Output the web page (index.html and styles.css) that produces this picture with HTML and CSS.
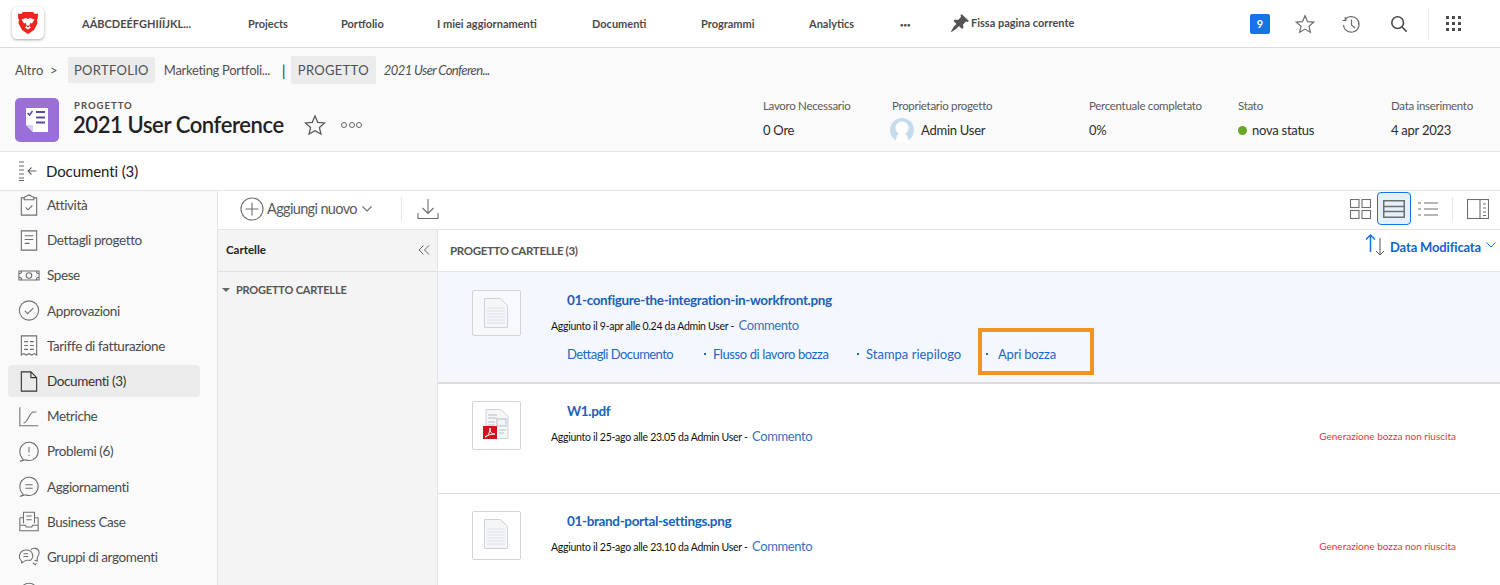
FILE: index.html
```html
<!DOCTYPE html>
<html lang="it">

<head>
    <meta charset="UTF-8">
    <title>2021 User Conference</title>
    <link rel="stylesheet" href="styles.css">
</head>

<body>

    <header class="topbar">
        <div class="logo">
            <svg width="22" height="24" viewBox="0 0 22 24">
                <path fill="#f0241c" d="M6 1h10l2 2 3-.5-.2 4.500-.8 2.500.6 2.500-3.600 7L11 23l-6-4-3.600-7 .6-2.500-.8-2.500L1 2.500 4 3z" />
                <path fill="#fff" d="M4.500 8.500 9 7l2 1 2-1 4.500 1.500-2.500 4-2-.5-.5 3 1.500 1.500-3 2-3-2L9.500 15l-.5-3-2 .5z" />
                <path fill="#f0241c" d="M9 14.500h4L11 16.500z" />
            </svg>
        </div>
        <nav class="topnav">
            <a>AÁBCDEÉFGHIÍÎJKL...</a>
            <a>Projects</a>
            <a>Portfolio</a>
            <a>I miei aggiornamenti</a>
            <a>Documenti</a>
            <a>Programmi</a>
            <a>Analytics</a>
            <a class="more">•••</a>
            <a class="pin">
                <svg width="18" height="18" viewBox="0 0 18 18">
                    <path fill="#555" d="M10.500 0 18 7l-1.500 1-1.500-.5-3 3 .5 3-1.500 1.500-3-3-3 3L.500 18l-.5-.5 2.500-4.500 3-3-3-3L4 5.500l3 .5 3-3-.5-1.500z" />
                </svg>
                Fissa pagina corrente
            </a>
        </nav>
        <div class="topicons">
            <span class="badge">9</span>
            <svg class="ic-star" width="20" height="20" viewBox="0 0 20 20">
                <path d="M10 1.800 12.500 7.600l6.200.5-4.700 4.100 1.400 6.100L10 15.100l-5.400 3.200 1.400-6.100-4.700-4.100 6.200-.5z" />
            </svg>
            <svg class="ic-line" width="20" height="20" viewBox="0 0 20 20">
                <path d="M3.500 6.500A7.800 7.800 0 1 1 2.500 11M1.500 6.500h3.500l-1 -3.500M10.500 5.500v5.500l3.500 3" />
            </svg>
            <svg class="ic-search" width="18" height="18" viewBox="0 0 20 20">
                <circle cx="8.500" cy="8.500" r="6.500" />
                <path d="m13 13 5.500 5.500" />
            </svg>
            <span class="topsep"></span>
            <div class="apps">
                <i></i><i></i><i></i><i></i><i></i><i></i><i></i><i></i><i></i>
            </div>
        </div>
    </header>

    <section class="projhead">
        <div class="crumbs">
            <span class="altro">Altro &nbsp;&gt;</span>
            <span class="tag">PORTFOLIO</span>
            <span class="crumb-name">Marketing Portfoli...</span>
            <span class="crumb-bar">|</span>
            <span class="tag tag-big">PROGETTO</span>
            <span class="crumb-it">2021 User Conferen...</span>
        </div>
        <div class="projrow">
            <div class="projicon">
                <svg width="24" height="26" viewBox="0 0 24 26">
                    <path fill="#fff" d="M1 1h22v24H8l-7-7z" />
                    <path fill="#d9cdf0" d="M1 18h7v7z" />
                    <path fill="none" stroke="#5a4b9c" stroke-width="1.500" d="m2.500 6 2 2 3-4" />
                    <path fill="none" stroke="#5a4b9c" stroke-width="2" d="M11 5h9M11 10.500h9M11 15.500h9" />
                </svg>
            </div>
            <div class="projtitle">
                <div class="projlabel">PROGETTO</div>
                <h1>2021 User Conference</h1>
            </div>
            <svg class="projstar" width="22" height="22" viewBox="0 0 20 20">
                <path d="M10 1.800 12.500 7.600l6.200.5-4.700 4.100 1.400 6.100L10 15.100l-5.400 3.200 1.400-6.100-4.700-4.100 6.200-.5z" />
            </svg>
            <div class="projdots"><i></i><i></i><i></i></div>
            <div class="projmeta">
                <div class="col col-work">
                    <label>Lavoro Necessario</label>
                    <span>0 Ore</span>
                </div>
                <div class="col col-owner">
                    <label>Proprietario progetto</label>
                    <span class="owner">
                        <svg width="24" height="24" viewBox="0 0 24 24">
                            <circle cx="12" cy="12" r="12" fill="#c5dcee" />
                            <circle cx="12" cy="10" r="6.500" fill="#fff" />
                            <path fill="#fff" d="M6 24c0-7 2-9 6-9s6 2 6 9z" />
                        </svg>
                        Admin User
                    </span>
                </div>
                <div class="col col-pct">
                    <label>Percentuale completato</label>
                    <span>0%</span>
                </div>
                <div class="col col-state">
                    <label>Stato</label>
                    <span><b class="dot"></b>nova status</span>
                </div>
                <div class="col">
                    <label>Data inserimento</label>
                    <span>4 apr 2023</span>
                </div>
            </div>
        </div>
    </section>

    <div class="subhead">
        <svg width="20" height="20" viewBox="0 0 20 20">
            <path d="M1 1h5M1 5h5M1 9h5M1 13h5M1 17h5M1 19.500h5" stroke-dasharray="none" />
            <path d="M18.500 10H10M13.500 6.500 10 10l3.500 3.500" />
        </svg>
        <span>Documenti (3)</span>
    </div>

    <div class="main">
        <aside class="sidebar">
            <ul class="sidelist">
                <li>
                    <svg viewBox="0 0 20 24"><path d="M5 4H2v18h16V4h-3M5 6V3.500L10 1l5 2.500V6zM6.500 14l2.500 2.500 4.500-4.500" /></svg>
                    Attività
                </li>
                <li>
                    <svg viewBox="0 0 20 24"><path d="M2 2h16v20H2zM5.500 7h9M5.500 11h9M5.500 15h5" /></svg>
                    Dettagli progetto
                </li>
                <li>
                    <svg viewBox="0 0 24 24"><path d="M1 7h22v10H1zM1 10c2 0 3-1 3-3M23 10c-2 0-3-1-3-3M1 14c2 0 3 1 3 3M23 14c-2 0-3 1-3 3" /><circle cx="12" cy="12" r="3" /></svg>
                    Spese
                </li>
                <li>
                    <svg viewBox="0 0 24 24"><circle cx="12" cy="12" r="10.500" /><path d="m7.500 12.500 3 3 6-6" /></svg>
                    Approvazioni
                </li>
                <li>
                    <svg viewBox="0 0 20 24"><path d="M2 22V2h16v20l-2.500-1.500L13 22l-3-1.500L7 22l-2.500-1.500zM5 8h4M11 8h4M5 12h4M11 12h4M5 16h4M11 16h4" /></svg>
                    Tariffe di fatturazione
                </li>
                <li class="active">
                    <svg viewBox="0 0 20 24"><path d="M2 2h10l6 6v14H2zM12 2v6h6" /></svg>
                    Documenti (3)
                </li>
                <li>
                    <svg viewBox="0 0 24 24"><path d="M2 2v20h20M6 19c5 0 6-12 11-12h3" /></svg>
                    Metriche
                </li>
                <li>
                    <svg viewBox="0 0 24 24"><path d="M6 21c-2-2-4-5-4-9a10 10 0 1 1 6 9l-6 2zM12 7v6M12 15.500v1.500" /></svg>
                    Problemi (6)
                </li>
                <li>
                    <svg viewBox="0 0 24 24"><path d="M6 21c-2-2-4-5-4-9a10 10 0 1 1 6 9l-6 2zM8 10h8M8 14h8" /></svg>
                    Aggiornamenti
                </li>
                <li>
                    <svg viewBox="0 0 24 24"><path d="M2 8h4M22 8h-4M2 8v14h20V8M2 16h6l1 2h6l1-2h6M6 14V2h12v12M9 6h6M9 10h6" /></svg>
                    Business Case
                </li>
                <li>
                    <svg viewBox="0 0 24 24"><path d="M4 17c-5-4-2-12 5-12s9 7 5 11H9l-5 3zM14 5c1-3 9-3 9 3 0 2-1 4-2 5v4l-3-1M6 9h5M6 12h5M16 19l3 2 1-2" /></svg>
                    Gruppi di argomenti
                </li>
                <li>
                    <svg viewBox="0 0 24 24"><circle cx="12" cy="12" r="10" /></svg>
                </li>
            </ul>
        </aside>

        <div class="content">
            <div class="toolbar">
                <svg class="tb-plus" width="24" height="24" viewBox="0 0 24 24">
                    <circle cx="12" cy="12" r="11" />
                    <path d="M12 5.500v13M5.500 12h13" />
                </svg>
                <span class="addnew">Aggiungi nuovo</span>
                <svg class="chev" width="10" height="6" viewBox="0 0 10 6"><path d="m.5.500 4.500 4.500L9.500.500" /></svg>
                <span class="tb-sep"></span>
                <svg class="tb-dl" width="22" height="22" viewBox="0 0 22 22">
                    <path d="M11 1v14M5.500 10l5.500 5.500 5.500-5.500M1 15v5.500h20V15" />
                </svg>
                <div class="views">
                    <svg width="21" height="20" viewBox="0 0 21 20">
                        <rect x=".5" y=".5" width="8.500" height="8" />
                        <rect x="12" y=".5" width="8.500" height="8" />
                        <rect x=".5" y="11.500" width="8.500" height="8" />
                        <rect x="12" y="11.500" width="8.500" height="8" />
                    </svg>
                    <span class="view-on">
                        <svg width="22" height="18" viewBox="0 0 22 18">
                            <rect x=".75" y=".75" width="20.500" height="16.500" />
                            <path d="M.75 6.500h20.500M.75 11.500h20.500" />
                        </svg>
                    </span>
                    <svg width="20" height="14" viewBox="0 0 20 14">
                        <path d="M0 1h3M6 1h14M0 7h3M6 7h14M0 13h3M6 13h14" />
                    </svg>
                    <span class="view-sep"></span>
                    <svg width="22" height="20" viewBox="0 0 22 20">
                        <rect x=".5" y=".5" width="21" height="19" />
                        <path d="M13 .5v19M16 5h3M16 9h3M16 13h3M16 16.500h3" />
                    </svg>
                </div>
            </div>

            <div class="panes">
                <div class="folders">
                    <div class="folders-head">
                        <span>Cartelle</span>
                        <svg width="12" height="10" viewBox="0 0 12 10"><path d="M5.500.500 1 5l4.500 4.500M11 .500 6.500 5l4.500 4.500" /></svg>
                    </div>
                    <div class="folder-item"><i class="tri"></i>PROGETTO CARTELLE</div>
                </div>

                <div class="docs">
                    <div class="docs-head">
                        <span class="docs-title">PROGETTO CARTELLE (3)</span>
                        <div class="sort">
                            <svg width="21" height="22" viewBox="0 0 21 22">
                                <path class="up" d="M5.500 18V1M1 5.500 5.500 1 10 5.500" />
                                <path class="down" d="M15 4v17M11 17l4 4 4-4" />
                            </svg>
                            <span>Data Modificata</span>
                            <svg class="chev-blue" width="10" height="6" viewBox="0 0 10 6"><path d="m.5.500 4.500 4.500L9.500.500" /></svg>
                        </div>
                    </div>

                    <article class="doc doc-sel">
                        <div class="thumb thumb-first">
                            <svg width="24" height="30" viewBox="0 0 24 30">
                                <path fill="#f4f6f8" stroke="#ccd2d8" d="M.5.500h16l7 7v22H.5z" />
                                <path fill="none" stroke="#dde1e6" d="M3 10h18M3 13h18M3 16h18M3 19h18M3 22h18M3 25h18" />
                            </svg>
                        </div>
                        <div class="doc-body">
                            <a class="doc-name">01-configure-the-integration-in-workfront.png</a>
                            <div class="doc-meta">Aggiunto il 9-apr alle 0.24 da Admin User - <a>Commento</a></div>
                            <div class="doc-actions">
                                <a class="act-1">Dettagli Documento</a>
                                <a class="act-2">Flusso di lavoro bozza</a>
                                <a class="act-3">Stampa riepilogo</a>
                                <a class="act-4">Apri bozza</a>
                            </div>
                        </div>
                        <div class="callout"></div>
                    </article>

                    <article class="doc">
                        <div class="thumb">
                            <svg width="26" height="30" viewBox="0 0 26 30">
                                <path fill="#f4f6f8" stroke="#ccd2d8" d="M3 .500h15l7 7v22H3z" />
                                <path fill="none" stroke="#b9c0c7" d="M5 6h9M5 9h9M5 13h7M5 16h7M16 21h7M16 24h5" />
                                <rect x="14" y="10" width="9" height="7" fill="none" stroke="#b9c0c7" />
                                <rect y="17" width="14" height="13" fill="#d1131c" />
                                <path fill="none" stroke="#fff" d="M2 28c4-1 5-6 5-9 0 5 2 6 5 6-4 0-7 1-10 3z" />
                            </svg>
                        </div>
                        <div class="doc-body">
                            <a class="doc-name">W1.pdf</a>
                            <div class="doc-meta">Aggiunto il 25-ago alle 23.05 da Admin User - <a>Commento</a></div>
                        </div>
                        <div class="doc-err">Generazione bozza non riuscita</div>
                    </article>

                    <article class="doc">
                        <div class="thumb">
                            <svg width="24" height="30" viewBox="0 0 24 30">
                                <path fill="#f4f6f8" stroke="#ccd2d8" d="M.5.500h16l7 7v22H.5z" />
                                <path fill="none" stroke="#dde1e6" d="M3 10h18M3 13h18M3 16h18M3 19h18M3 22h18M3 25h18" />
                            </svg>
                        </div>
                        <div class="doc-body">
                            <a class="doc-name">01-brand-portal-settings.png</a>
                            <div class="doc-meta">Aggiunto il 25-ago alle 23.10 da Admin User - <a>Commento</a></div>
                        </div>
                        <div class="doc-err">Generazione bozza non riuscita</div>
                    </article>
                </div>
            </div>
        </div>
    </div>

</body>

</html>
```

FILE: styles.css
```css
* {
    margin: 0;
    padding: 0;
    box-sizing: border-box;
    list-style: none;
}

html,
body {
    height: 585px;
    overflow: hidden;
}

body {
    background: #fff;
    color: #2c2c2c;
    font-family: "Lato", "Noto Sans", sans-serif;
    font-size: 13px;
}

/* top bar */
.topbar {
    display: flex;
    align-items: center;
    height: 48px;
    padding-left: 12px;
    border-bottom: 1px solid #dcdcdc;
}

.logo {
    display: flex;
    align-items: center;
    justify-content: center;
    width: 32px;
    height: 32px;
    margin-bottom: 1px;
    border-radius: 5px;
    background: #fff;
    box-shadow: 0 1px 3px rgba(0, 0, 0, .35);
}

.topnav {
    display: grid;
    grid-template-columns: 166px 93px 96px 155px 109px 108px 91px 51px auto;
    margin: 1px 0 0 38px;
    font-size: 11px;
    font-weight: 700;
    color: #4b4b4b;
}

.topnav .more {
    font-size: 6px;
    line-height: 15px;
}

.topnav .pin {
    display: flex;
    align-items: center;
    gap: 2px;
    margin-top: -3px;
}

.topicons {
    display: flex;
    align-items: center;
    margin-left: auto;
    height: 40px;
}

.badge {
    width: 20px;
    height: 20px;
    margin-right: 25px;
    border-radius: 2px;
    background: #1473e6;
    color: #fff;
    font-size: 11px;
    font-weight: 700;
    line-height: 20px;
    text-align: center;
}

.topicons svg {
    fill: none;
    stroke: #6e6e6e;
    stroke-width: 1.2;
}

.ic-line {
    margin: 0 29px 0 26px;
}

.ic-search {
    margin-right: 20px;
    stroke: #4b4b4b !important;
    stroke-width: 1.800 !important;
}

.topsep {
    width: 1px;
    height: 32px;
    background: #ececec;
}

.apps {
    display: grid;
    grid-template-columns: repeat(3, 3px);
    gap: 3px;
    margin: 0 39px 0 17px;
}

.apps i {
    height: 3px;
    background: #4b4b4b;
}

/* project header */
.projhead {
    height: 104px;
    background: #fafafa;
    border-bottom: 1px solid #e4e4e4;
}

.crumbs {
    display: flex;
    align-items: center;
    height: 36px;
    padding: 7px 0 0 15px;
    color: #505050;
    font-size: 13px;
}

.altro {
    width: 53px;
}

.tag {
    padding: 5px 6px;
    border-radius: 2px;
    background: #ebebeb;
    letter-spacing: .3px;
    line-height: 16px;
}

.tag-big {
    padding: 6px 7px;
}

.crumb-name {
    width: 118px;
    margin-left: 9px;
    letter-spacing: -.3px;
}

.crumb-bar {
    width: 9px;
    color: #1d3a6e;
    font-size: 15px;
}

.crumb-it {
    margin-left: 8px;
    font-style: italic;
    letter-spacing: -.6px;
}

.projrow {
    display: flex;
    align-items: flex-start;
    padding: 14px 0 0 15px;
}

.projicon {
    display: flex;
    align-items: center;
    justify-content: center;
    width: 44px;
    height: 44px;
    border-radius: 5px;
    background: #9a6fd8;
}

.projtitle {
    width: 231px;
    margin-left: 14px;
}

.projlabel {
    margin: 1px 0 0 1px;
    font-size: 9.500px;
    font-weight: 700;
    letter-spacing: 1px;
    line-height: 14px;
    color: #505050;
}

.projtitle h1 {
    margin-top: -1px;
    font-size: 22px;
    font-weight: 600;
    letter-spacing: -.4px;
    line-height: 26px;
    color: #222;
}

.projstar {
    margin-top: 16px;
    fill: none;
    stroke: #555;
    stroke-width: 1.100;
}

.projdots {
    display: flex;
    gap: 1.500px;
    margin: 24px 0 0 15px;
}

.projdots i {
    width: 6px;
    height: 6px;
    border: 1px solid #666;
    border-radius: 50%;
}

.projmeta {
    display: flex;
    margin-left: 401px;
    padding-top: 1px;
}

.col {
    display: flex;
    flex-direction: column;
    gap: 9px;
}

.col label {
    font-size: 11.500px;
    letter-spacing: -.3px;
    line-height: 14px;
    color: #5a5a5a;
}

.col span {
    display: flex;
    align-items: center;
    height: 16px;
    font-size: 13px;
    letter-spacing: -.25px;
}

.col-work {
    width: 129px;
}

.col-owner {
    width: 197px;
}

.col-pct {
    width: 149px;
}

.col-state {
    width: 153px;
}

.owner {
    gap: 7px;
    margin-left: -2px;
}

.dot {
    width: 9px;
    height: 9px;
    margin-right: 5px;
    border-radius: 50%;
    background: #68a32a;
}

/* documents sub header */
.subhead {
    display: flex;
    align-items: center;
    gap: 8px;
    height: 39px;
    padding-left: 18px;
    border-bottom: 1px solid #e4e4e4;
    font-size: 15px;
    letter-spacing: -.1px;
    color: #222;
}

.subhead svg {
    fill: none;
    stroke: #666;
    stroke-width: 1.100;
}

/* main */
.main {
    display: flex;
    height: 394px;
}

.sidebar {
    flex: none;
    width: 218px;
    overflow: hidden;
    background: #fafafa;
    border-right: 1px solid #e4e4e4;
}

.sidelist {
    margin-top: -3.500px;
    padding: 0 17px 0 8px;
}

.sidelist li {
    display: flex;
    align-items: center;
    gap: 7px;
    height: 35.200px;
    padding-left: 10px;
    border-radius: 4px;
    font-size: 13.500px;
    letter-spacing: -.4px;
    color: #4b4b4b;
}

.sidelist svg {
    flex: none;
    width: 22px;
    height: 23px;
    fill: none;
    stroke: #6e6e6e;
    stroke-width: 1.150;
}

.sidelist .active {
    height: 32px;
    margin: 1.600px 0;
    background: #ebebeb;
    color: #333;
}

.sidelist .active svg {
    stroke: #333;
}

.content {
    flex: 1;
    min-width: 0;
}

.toolbar {
    display: flex;
    align-items: center;
    height: 39px;
    padding: 0 0 3px 22px;
    border-bottom: 1px solid #e4e4e4;
}

.toolbar svg {
    flex: none;
    fill: none;
    stroke: #6e6e6e;
    stroke-width: 1.100;
}

.addnew {
    margin-left: 3px;
    font-size: 14.500px;
    letter-spacing: -.65px;
    color: #5a5a5a;
}

.chev {
    margin-left: 5px;
}

.tb-sep {
    width: 1px;
    height: 24px;
    margin: 0 15px 0 29px;
    background: #e6e6e6;
}

.views {
    display: flex;
    align-items: center;
    margin-left: auto;
    margin-right: 11px;
}

.view-on {
    display: flex;
    align-items: center;
    justify-content: center;
    width: 34px;
    height: 33px;
    margin: 0 7px 0 6px;
    border: 1px solid #1473e6;
    border-radius: 4px;
    background: #e6f0fb;
}

.view-on svg {
    stroke-width: 1.500 !important;
}

.view-sep {
    width: 1px;
    height: 24px;
    margin: 0 14px;
    background: #e6e6e6;
}

.panes {
    display: flex;
    height: 355px;
}

.folders {
    flex: none;
    width: 220px;
    background: #f4f4f4;
    border-right: 1px solid #e4e4e4;
}

.folders-head {
    display: flex;
    align-items: center;
    justify-content: space-between;
    height: 42px;
    padding: 0 7px 2px 8px;
    border-bottom: 1px solid #e0e0e0;
    font-size: 11.500px;
    font-weight: 700;
    color: #222;
}

.folders-head svg {
    stroke: #666;
    fill: none;
}

.folder-item {
    display: flex;
    align-items: center;
    padding: 11px 0 0 4px;
    font-size: 11px;
    font-weight: 700;
    letter-spacing: -.2px;
    color: #555;
}

.tri {
    width: 0;
    height: 0;
    margin-right: 6px;
    border: 4px solid transparent;
    border-top: 4px solid #666;
    border-bottom: 0;
}

.docs {
    flex: 1;
    min-width: 0;
}

.docs-head {
    display: flex;
    justify-content: space-between;
    height: 42px;
    padding: 14px 4px 0 12px;
    border-bottom: 1px solid #e4e4e4;
}

.docs-title {
    font-size: 11.500px;
    font-weight: 700;
    letter-spacing: -.35px;
    color: #555;
}

.sort {
    display: flex;
    align-items: center;
    height: 22px;
    margin-top: -10px;
    font-size: 13px;
    font-weight: 700;
    letter-spacing: -.15px;
    color: #1264c8;
}

.sort svg {
    fill: none;
    stroke: #555;
}

.sort .up {
    stroke: #1473e6;
    stroke-width: 1.500;
}

.sort span {
    margin: 4px 5px 0 4px;
}

.sort .chev-blue {
    stroke: #1473e6;
}

.doc {
    position: relative;
    display: flex;
    height: 110px;
    padding: 17px 44px 0 34px;
    border-bottom: 1px solid #dcdcdc;
}

.doc-sel {
    height: 112px;
    padding-top: 18px;
    background: #f4f8fe;
    border-bottom: 2px solid #dcdcdc;
}

.thumb {
    display: flex;
    flex: none;
    align-items: center;
    justify-content: center;
    width: 49px;
    height: 49px;
    padding: 0 2px 3px 0;
    border: 1px solid #d4d4d4;
    border-radius: 2px;
    background: #fff;
}

.thumb-first {
    height: 46px;
    padding-bottom: 0;
    background: #f7f9fc;
}

.doc-body {
    margin-left: 30px;
}

.doc-name {
    display: block;
    margin-left: 16px;
    font-size: 13.500px;
    font-weight: 700;
    letter-spacing: -.35px;
    line-height: 20px;
    color: #1a5fb8;
}

.doc-meta {
    margin-top: 5px;
    font-size: 10.500px;
    letter-spacing: -.28px;
    line-height: 20px;
    color: #111;
}

.doc-meta a {
    margin-left: 2px;
    font-size: 13px;
    letter-spacing: -.4px;
    color: #3b6fc0;
}

.doc-actions {
    display: flex;
    margin: 8px 0 0 16px;
    font-size: 13px;
    line-height: 20px;
    color: #2367c4;
}

.doc-actions a {
    position: relative;
}

.act-1 {
    width: 146px;
    letter-spacing: -.55px;
}

.act-2 {
    width: 153px;
    letter-spacing: -.4px;
}

.act-3 {
    width: 132px;
}

.act-4 {
    letter-spacing: -.2px;
}

.act-2::before,
.act-3::before,
.act-4::before {
    content: "";
    position: absolute;
    left: -9px;
    top: 9px;
    width: 2px;
    height: 2px;
    background: #2367c4;
}

.act-4::before {
    left: -12px;
}

.callout {
    position: absolute;
    left: 540px;
    top: 56px;
    width: 116px;
    height: 47px;
    border: 4px solid #f29423;
}

.doc-err {
    margin: 27px 0 0 auto;
    font-size: 10px;
    line-height: 16px;
    color: #e6343f;
}
```
